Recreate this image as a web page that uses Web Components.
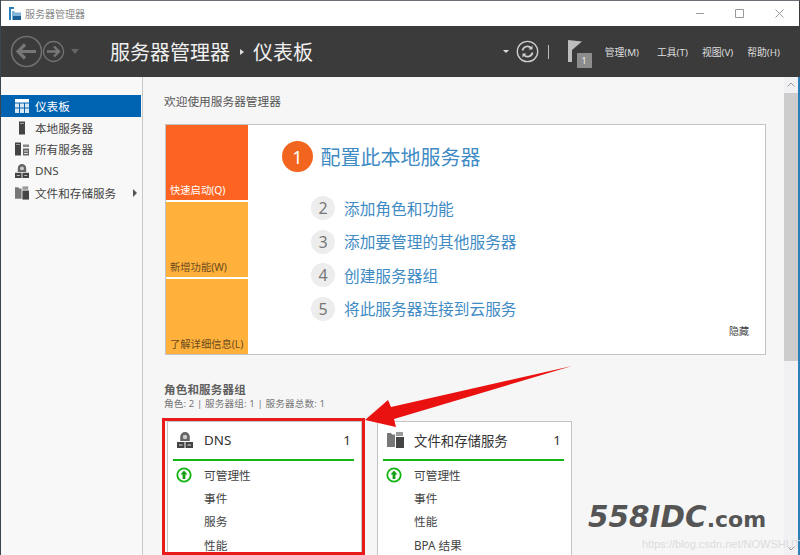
<!DOCTYPE html>
<html lang="zh">
<head>
<meta charset="utf-8">
<title>服务器管理器</title>
<style>
html, body {
	margin: 0;
	height: 100%;
	overflow: hidden;
	background: #f6f6f6;
	font-family: "Noto Sans", "Noto Sans CJK SC", sans-serif;
}
sm-app {
	height: 555px;
}
</style>
</head>
<body>

<sm-app></sm-app>

<script>
const ICONS = {
	dashboard: `<svg width="14" height="14" viewBox="0 0 14 14"><path fill="currentColor" d="M0 0h14v3.500H0z"/><path fill="currentColor" opacity=".85" d="M0 4.500h4v4H0zM5 4.500h4v4H5zM10 4.500h4v4h-4zM0 9.500h4V14H0zM5 9.500h4V14H5zM10 9.500h4V14h-4z"/></svg>`,
	server: `<svg width="14" height="13" viewBox="0 0 14 13"><path fill="#444" d="M4 0h6v13H4z"/><path fill="#999" d="M5 1.500h4v1H5z"/></svg>`,
	servers: `<svg width="14" height="13" viewBox="0 0 14 13"><path fill="#444" d="M0 0h6v13H0z"/><path fill="#999" d="M1 1.500h4v1H1z"/><path fill="#888" d="M8 2h6v2.500H8z"/><path fill="#666" d="M8 6h6v7H8z"/><path fill="#ddd" d="M9 8h4v1H9zM9 10.500h4v1H9z"/></svg>`,
	dns: `<svg width="16" height="16" viewBox="0 0 16 16"><path fill="#666" d="M8 0a4.800 4.800 0 0 1 4.800 4.800V9H3.200V4.800A4.800 4.800 0 0 1 8 0z"/><circle cx="8" cy="5" r="2.200" fill="#ccc"/><path fill="#444" d="M0 10h7.500v6H0zM8.500 10H16v6H8.500z"/><path fill="#ddd" d="M2 12.500h3.500v1H2zM10.500 12.500H14v1h-3.500z"/></svg>`,
	files: `<svg width="17" height="16" viewBox="0 0 17 16"><path fill="#777" d="M0 1h4l1 1.500h3V15H0z"/><path fill="#999" d="M9 0h7v4H9z"/><path fill="#444" d="M9 5h8v11H9z"/></svg>`,
	health: `<svg width="16" height="16" viewBox="0 0 16 16"><circle cx="8" cy="8" r="6.700" fill="#fff" stroke="#11b411" stroke-width="1.800"/><path fill="#11a011" d="M8 3.500 11.500 7.500H9.400V12H6.600V7.500H4.500z"/></svg>`
};

const define = (name, template) => {
	customElements.define(name, class extends HTMLElement{
		connectedCallback(){
			if(this.shadowRoot){
				return;
			}
			this.attachShadow({mode: "open"});
			this.shadowRoot.innerHTML = typeof template === "function" ? template(this) : template;
		}
	});
};

define("sm-titlebar", `
<style>
:host {
	display: flex;
	align-items: center;
	flex: none;
	height: 25px;
	background: #fff;
	border-top: 1px solid #6b6f76;
	border-right: 1px solid #3b3b3b;
	padding-left: 8px;
	font-size: 10px;
	color: #8a8a8a;
	gap: 4px;
}
span { flex: 1; }
.buttons { display: flex; padding-right: 15px; gap: 31px; align-items: center; }
svg { display: block; }
</style>
<svg width="12" height="13" viewBox="0 0 12 13">
	<path fill="#2a7fb8" d="M0 0h5v2H2v11H0z"/>
	<path fill="#7fb4d8" d="M3 4h2l1 1.500h6V13H3z"/>
	<path fill="#1c5f94" d="M4 9h8v4H4z"/>
</svg>
<span>服务器管理器</span>
<div class="buttons">
	<svg width="8" height="2" viewBox="0 0 8 2"><path fill="#9a9a9a" d="M0 0h8v1H0z"/></svg>
	<svg width="9" height="9" viewBox="0 0 9 9"><path fill="none" stroke="#9a9a9a" d="M.5.500h8v8h-8z"/></svg>
	<svg width="9" height="9" viewBox="0 0 9 9"><path fill="none" stroke="#9a9a9a" d="M.5.500l8 8M8.500.500l-8 8"/></svg>
</div>
`);

define("sm-header", `
<style>
:host {
	display: flex;
	align-items: center;
	height: 51px;
	background: #3b3b3b;
	color: #eee;
	flex: none;
}
.nav { display: flex; align-items: center; margin-left: 9px; width: 100px; flex: none; }
.crumbs {
	display: flex;
	align-items: center;
	flex: 1;
	font-size: 20px;
	gap: 9.500px;
	color: #f0f0f0;
}
.crumbs i { width: 0; height: 0; border-left: 4px solid #ddd; border-top: 3px solid transparent; border-bottom: 3px solid transparent; }
.tools { display: flex; align-items: center; }
.menu { display: flex; font-size: 9.800px; color: #ddd; margin-right: 20px; }
.menu span { margin-left: 14px; white-space: nowrap; }
.menu span:first-child { margin-left: 0; }
svg { display: block; flex: none; }
.caret { width: 0; height: 0; border-top: 3px solid #ddd; border-left: 3px solid transparent; border-right: 3px solid transparent; margin-right: 7px; }
.sep { width: 1px; height: 14px; background: #bbb; margin: 0 19px 0 9px; }
.flag { position: relative; width: 24px; height: 28px; margin-right: 13px; margin-top: 5px; }
.flag svg { position: absolute; left: 0; top: 0; }
.flag b {
	position: absolute;
	right: 0;
	bottom: 0;
	width: 15px;
	height: 15px;
	background: #8c8c8c;
	color: #eee;
	font-size: 9px;
	font-weight: 400;
	text-align: center;
	line-height: 15px;
}
</style>
<div class="nav">
	<svg width="33" height="33" viewBox="0 0 33 33"><circle cx="16.500" cy="16.500" r="15" fill="none" stroke="#6f6f6f" stroke-width="1.600"/><path fill="none" stroke="#777" stroke-width="3.200" d="M26 16.500H8M15 9.500l-7 7 7 7"/></svg>
	<svg width="23" height="23" viewBox="0 0 23 23" style="margin-left:-1px"><circle cx="11.500" cy="11.500" r="10" fill="none" stroke="#6f6f6f" stroke-width="1.300"/><path fill="none" stroke="#777" stroke-width="2.400" d="M5 11.500h12M12 6.500l5 5-5 5"/></svg>
	<svg width="8" height="5" viewBox="0 0 8 5" style="margin-left:6px"><path fill="#666" d="M0 0h8L4 5z"/></svg>
</div>
<div class="crumbs"><span>服务器管理器</span><i></i><span>仪表板</span></div>
<div class="tools">
	<div class="caret"></div>
	<svg width="23" height="23" viewBox="0 0 23 23"><circle cx="11.500" cy="11.500" r="10.200" fill="none" stroke="#cfcfcf" stroke-width="1.300"/><path fill="none" stroke="#cfcfcf" stroke-width="1.700" d="M6.500 10.500a5 5 0 0 1 8.800-2.300M16.500 12.500a5 5 0 0 1-8.800 2.300"/><path fill="#cfcfcf" d="M16.500 5.500v4h-4zM6.500 17.500v-4h4z"/></svg>
	<div class="sep"></div>
	<div class="flag">
		<svg width="15" height="22" viewBox="0 0 15 22"><path fill="#bdbdbd" d="M0 0 14 1.500 4 10V22H0z"/></svg>
		<b>1</b>
	</div>
	<div class="menu"><span>管理(M)</span><span style="margin-left:18px">工具(T)</span><span>视图(V)</span><span>帮助(H)</span></div>
</div>
`);

define("sm-nav-item", host => `
<style>
:host {
	display: flex;
	align-items: center;
	height: ${host.hasAttribute("active") ? "22px" : "21.600px"};
	padding-left: 13px;
	font-size: 11.600px;
	color: ${host.hasAttribute("active") ? "#fff" : "#444"};
	background: ${host.hasAttribute("active") ? "#0063b1" : "transparent"};
}
.icon { width: 15px; margin-right: 6px; display: flex; justify-content: center; }
.icon svg { width: 14px; height: 14px; }
.text { flex: 1; }
i { width: 0; height: 0; border-left: 4px solid #555; border-top: 4px solid transparent; border-bottom: 4px solid transparent; margin-right: 4px; }
</style>
<div class="icon">${ICONS[host.getAttribute("icon")]}</div>
<div class="text"><slot></slot></div>
${host.hasAttribute("more") ? "<i></i>" : ""}
`);

define("sm-sidebar", `
<style>
:host {
	display: block;
	box-sizing: border-box;
	width: 142px;
	flex: none;
	background: #f8f8f8;
	border-right: 1px solid #c8c8c8;
	padding: 18px 1px 0 0;
}
</style>
<slot></slot>
`);

define("sm-tile", host => `
<style>
:host {
	display: flex;
	align-items: flex-end;
	flex: 1;
	background: ${host.getAttribute("tone") === "hot" ? "#fd6321" : "#ffb13b"};
	color: ${host.getAttribute("tone") === "hot" ? "#fff" : "#6a4a20"};
	font-size: 10.300px;
	padding: 0 0 3px 4px;
}
</style>
<slot></slot>
`);

define("sm-step", host => {
	const lead = host.hasAttribute("lead");
	return `
<style>
:host {
	display: flex;
	align-items: center;
	height: ${lead ? "31px" : "24px"};
	color: #3f8bc4;
	font-size: ${lead ? "20px" : "15.700px"};
	margin-left: ${lead ? "0" : "29px"};
	gap: ${lead ? "7.500px" : "9px"};
}
b {
	display: flex;
	align-items: center;
	justify-content: center;
	border-radius: 50%;
	font-weight: 400;
	flex: none;
	width: ${lead ? "31px" : "24px"};
	height: ${lead ? "31px" : "24px"};
	background: ${lead ? "#f2651f" : "#ededed"};
	color: ${lead ? "#fff" : "#777"};
	font-size: ${lead ? "18px" : "16px"};
}
</style>
<b>${host.getAttribute("num")}</b><span><slot></slot></span>
`;
});

define("sm-welcome", `
<style>
:host {
	display: flex;
	height: 229px;
	margin-top: 15px;
	width: 599px;
	background: #fff;
	border: 1px solid #c4c4c4;
	position: relative;
}
.tiles { width: 82px; display: flex; flex-direction: column; gap: 2px; }
.steps { flex: 1; display: flex; flex-direction: column; padding: 16px 0 0 34px; position: relative; }
.rest { display: flex; flex-direction: column; gap: 9.500px; margin-top: 24px; }
.hide { position: absolute; right: 16px; bottom: 16px; font-size: 10px; color: #444; }
</style>
<div class="tiles"><slot name="tiles"></slot></div>
<div class="steps">
	<slot name="lead"></slot>
	<div class="rest"><slot name="rest"></slot></div>
	<div class="hide">隐藏</div>
</div>
`);

define("sm-role-card", host => `
<style>
:host {
	display: block;
	box-sizing: border-box;
	width: 195px;
	height: 180px;
	flex: none;
	background: #fff;
	border: 1px solid #c4c4c4;
	padding: 0 7px 0 5px;
}
.head {
	display: flex;
	align-items: center;
	height: 37px;
	border-bottom: 2px solid #16b516;
	font-size: 13.400px;
	color: #333;
	padding: 0 3px 0 4px;
	margin-bottom: 3px;
}
.icon { width: 22px; margin-right: 5px; display: flex; }
.name { flex: 1; }
.rows { font-size: 11.700px; color: #444; line-height: 23.200px; padding-left: 31px; position: relative; }
.rows svg { position: absolute; left: 3px; top: 3px; }
</style>
<div class="head">
	<div class="icon">${ICONS[host.getAttribute("icon")]}</div>
	<div class="name">${host.getAttribute("name")}</div>
	<div>${host.getAttribute("count")}</div>
</div>
<div class="rows">${ICONS.health}<slot></slot></div>
`);

define("sm-role-row", `
<style>
:host { display: block; }
</style>
<slot></slot>
`);

define("sm-content", `
<style>
:host {
	display: block;
	flex: 1;
	min-width: 0;
	padding: 17px 0 0 21px;
	background: #f6f6f6;
	overflow: hidden;
	box-sizing: border-box;
	font-size: 10px;
	color: #555;
}
.title { font-size: 11.700px; color: #555; line-height: 15px; height: 15px; }
.roles-title { font-size: 11.500px; letter-spacing: .2px; font-weight: 700; color: #5f5f5f; line-height: 13px; margin: 28.300px 0 1.900px 0; }
.roles-count { font-size: 9.600px; letter-spacing: .13px; color: #777; line-height: 12px; }
.cards { display: flex; gap: 15px; margin: 10.800px 0 0 3px; }
.welcome { margin-left: 1px; }
</style>
<div class="title">欢迎使用服务器管理器</div>
<div class="welcome"><slot name="welcome"></slot></div>
<div class="roles-title">角色和服务器组</div>
<div class="roles-count">角色: 2 | 服务器组: 1 | 服务器总数: 1</div>
<div class="cards"><slot name="cards"></slot></div>
`);

define("sm-scrollbar", `
<style>
:host {
	display: flex;
	flex-direction: column;
	align-items: center;
	box-sizing: border-box;
	width: 16px;
	flex: none;
	background: #f1f1f4;
	border-right: 2px solid #2d7fb8;
}
.thumb {
	align-self: stretch;
	height: 268px;
	background: #cdcdcd;
	flex: none;
}
.up { margin: 5px 0 6px; flex: none; }
.down { margin: auto 0 4px; flex: none; }
</style>
<svg class="up" width="8" height="5" viewBox="0 0 8 5"><path fill="none" stroke="#999" d="M.5 4.500l3.500-3.500 3.500 3.500"/></svg>
<div class="thumb"></div>
<svg class="down" width="8" height="5" viewBox="0 0 8 5"><path fill="none" stroke="#999" d="M.5.500l3.500 3.500 3.500-3.500"/></svg>
`);

define("sm-annotations", `
<style>
:host {
	position: absolute;
	inset: 0;
	pointer-events: none;
	display: block;
}
.box {
	position: absolute;
	left: 161px;
	top: 418px;
	width: 197px;
	height: 131px;
	border: 3px solid #e81a1a;
}
svg { position: absolute; left: -1px; top: 0; }
.brand {
	position: absolute;
	left: 587px;
	top: 501px;
	color: #555;
	font-family: "DejaVu Sans", sans-serif;
	font-weight: 700;
	font-style: italic;
	font-size: 29.500px;
	line-height: 32px;
	white-space: nowrap;
}
.brand span { font-size: 22px; font-style: normal; }
.url {
	position: absolute;
	left: 641px;
	top: 537px;
	color: #dcdcdc;
	font-family: "Liberation Sans", sans-serif;
	font-size: 11px;
	line-height: 14px;
	white-space: nowrap;
}
</style>
<div class="box"></div>
<svg width="800" height="555" viewBox="0 0 800 555"><path fill="#ea1111" d="M572 366 391 407 388 400 365 420 396 427 394 419z"/></svg>
<div class="brand">558IDC<span>.com</span></div>
<div class="url">https://blog.csdn.net/NOWSHUT</div>
`);

define("sm-app", `
<style>
:host {
	display: flex;
	flex-direction: column;
	position: relative;
	overflow: hidden;
	box-sizing: border-box;
	height: 555px;
	background: #f6f6f6;
	border-left: 1px solid #3b4550;
}
.body { display: flex; flex: 1; min-height: 0; }
</style>
<sm-titlebar></sm-titlebar>
<sm-header></sm-header>
<div class="body">
	<sm-sidebar>
		<sm-nav-item icon="dashboard" active>仪表板</sm-nav-item>
		<sm-nav-item icon="server">本地服务器</sm-nav-item>
		<sm-nav-item icon="servers">所有服务器</sm-nav-item>
		<sm-nav-item icon="dns">DNS</sm-nav-item>
		<sm-nav-item icon="files" more>文件和存储服务</sm-nav-item>
	</sm-sidebar>
	<sm-content>
		<sm-welcome slot="welcome">
			<sm-tile slot="tiles" tone="hot">快速启动(Q)</sm-tile>
			<sm-tile slot="tiles">新增功能(W)</sm-tile>
			<sm-tile slot="tiles">了解详细信息(L)</sm-tile>
			<sm-step slot="lead" lead num="1">配置此本地服务器</sm-step>
			<sm-step slot="rest" num="2">添加角色和功能</sm-step>
			<sm-step slot="rest" num="3">添加要管理的其他服务器</sm-step>
			<sm-step slot="rest" num="4">创建服务器组</sm-step>
			<sm-step slot="rest" num="5">将此服务器连接到云服务</sm-step>
		</sm-welcome>
		<sm-role-card slot="cards" icon="dns" name="DNS" count="1">
			<sm-role-row>可管理性</sm-role-row><sm-role-row>事件</sm-role-row><sm-role-row>服务</sm-role-row><sm-role-row>性能</sm-role-row>
		</sm-role-card>
		<sm-role-card slot="cards" icon="files" name="文件和存储服务" count="1">
			<sm-role-row>可管理性</sm-role-row><sm-role-row>事件</sm-role-row><sm-role-row>性能</sm-role-row><sm-role-row>BPA 结果</sm-role-row>
		</sm-role-card>
	</sm-content>
	<sm-scrollbar></sm-scrollbar>
</div>
<sm-annotations></sm-annotations>
`);
</script>
</body>
</html>
